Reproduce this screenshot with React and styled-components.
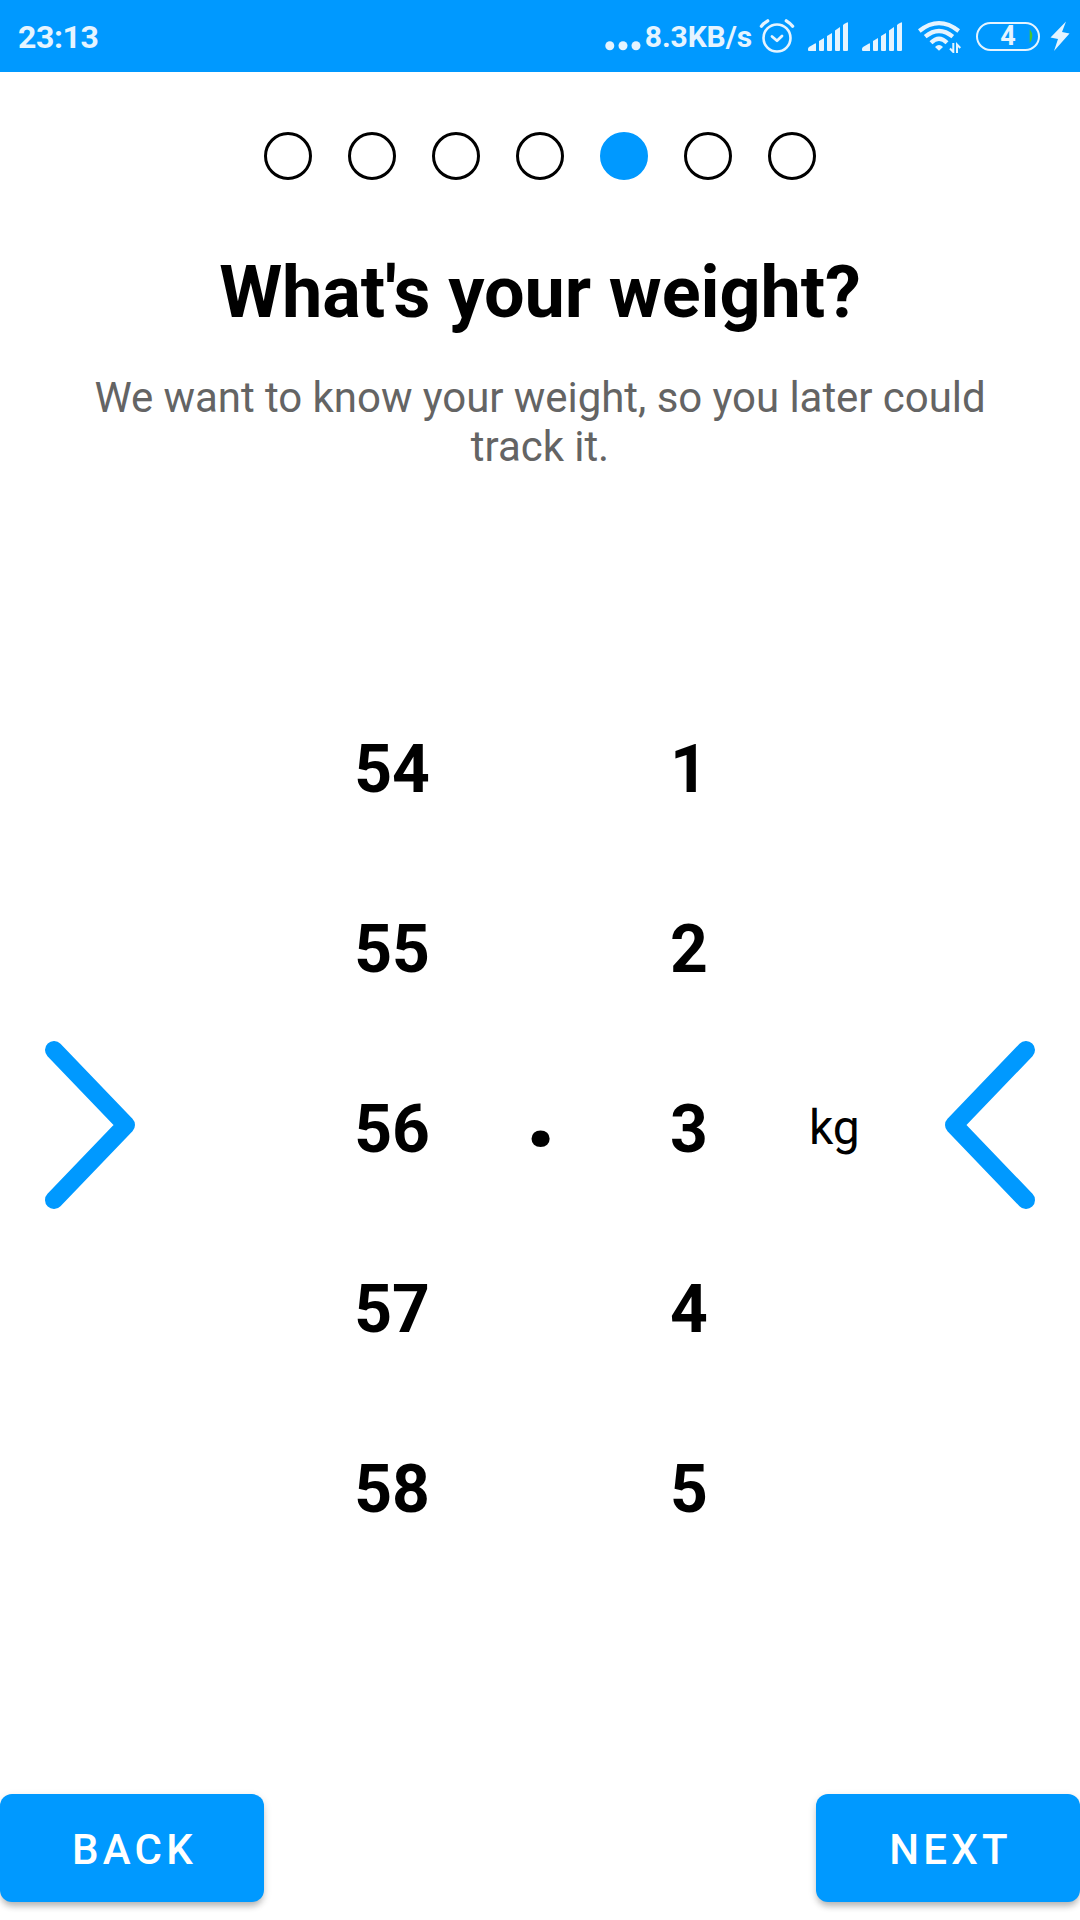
import React from "react";
import styled, { createGlobalStyle } from "styled-components";

const BLUE = "#0099ff";
const STATUS = "#e5f4ff";

const GlobalStyle = createGlobalStyle`
  * { box-sizing: border-box; }
  body { margin: 0; background: #fff; font-family: Roboto, "Noto Sans", sans-serif; }
`;

const Screen = styled.div`
  width: 1080px;
  height: 1920px;
  display: flex;
  flex-direction: column;
  background: #fff;
  color: #000;
  overflow: hidden;
`;

const StatusBar = styled.header`
  height: 72px;
  flex: none;
  display: flex;
  align-items: center;
  justify-content: space-between;
  padding: 0 10px 0 18px;
  background: ${BLUE};
  color: ${STATUS};
`;

const Clock = styled.span`
  font-size: 32px;
  line-height: 38px;
  font-weight: 700;
  letter-spacing: -0.4px;
  padding-top: 1px;
`;

const StatusGroup = styled.div`
  display: flex;
  align-items: center;
  height: 72px;
`;

const Speed = styled.span`
  font-size: 30px;
  line-height: 36px;
  font-weight: 700;
  letter-spacing: -0.1px;
  padding-top: 2px;
`;

const Drawing = styled.svg`
  display: block;
  flex: none;
  margin-left: ${(p) => p.$gap || 0}px;
`;

const Battery = styled.div`
  width: 64px;
  height: 29px;
  margin-left: 15px;
  border: 2px solid ${STATUS};
  border-radius: 15px;
  display: grid;
  grid-template-columns: 9px 1fr 9px;
  align-items: center;
`;

const Charge = styled.span`
  grid-column: 2;
  text-align: center;
  font-size: 27px;
  line-height: 32px;
  margin: -4px 0;
  font-weight: 700;
`;

const Steps = styled.nav`
  display: flex;
  justify-content: center;
  gap: 36px;
  margin-top: 60px;
`;

const Step = styled.span`
  width: 48px;
  height: 48px;
  border-radius: 50%;
  border: 3px solid ${(p) => (p.$active ? BLUE : "#000")};
  background: ${(p) => (p.$active ? BLUE : "transparent")};
`;

const Title = styled.h1`
  margin: 71px 0 0;
  font-size: 72px;
  line-height: 84px;
  font-weight: 700;
  letter-spacing: -0.07px;
  text-align: center;
`;

const Subtitle = styled.p`
  margin: 38px 60px 0;
  font-size: 42px;
  line-height: 49px;
  letter-spacing: -0.05px;
  text-align: center;
  color: #646464;
`;

const Picker = styled.main`
  display: grid;
  grid-template-columns: 135px 137px 240px 57px 240px 136px 135px;
  align-items: center;
  height: 900px;
  margin-top: 209px;
`;

const Arrow = styled.div`
  grid-column: ${(p) => p.$column};
  display: flex;
  justify-content: ${(p) => p.$align};
  padding-bottom: 10px;
`;

const Wheel = styled.div`
  grid-column: ${(p) => p.$column};
  display: grid;
  grid-auto-rows: 180px;
  font-size: 66px;
  font-weight: 700;
  line-height: 78px;
  text-align: center;
  align-items: center;
`;

const Point = styled.span`
  font-size: 114px;
  line-height: 134px;
  font-weight: 700;
  text-align: center;
  padding: 0 0 46px 1px;
`;

const Unit = styled.span`
  font-size: 48px;
  line-height: 56px;
  padding-bottom: 4px;
`;

const Actions = styled.footer`
  display: flex;
  justify-content: space-between;
  margin-top: auto;
  padding-bottom: 18px;
`;

const Button = styled.button`
  width: 264px;
  height: 108px;
  padding: 2px 0 0 5px;
  border: 0;
  border-radius: 12px;
  background: ${BLUE};
  color: #fff;
  font: 500 42px/49px Roboto, sans-serif;
  letter-spacing: 4.2px;
  box-shadow: 0 6px 6px -2px rgba(0, 0, 0, 0.2), 0 3px 9px rgba(0, 0, 0, 0.14);
`;

const Signal = ({ gap }) => (
  <Drawing $gap={gap} width="40" height="29" viewBox="0 0 40 29" fill={STATUS}>
    <path d="M0 27Q0 26 1 25L7 21.5Q8 21 8 22V29H1Q0 29 0 28Z" />
    <path d="M11 19L16 16V28Q16 29 15 29H12Q11 29 11 28Z" />
    <path d="M19 14L24 11V28Q24 29 23 29H20Q19 29 19 28Z" />
    <path d="M27 8.5L32 5V28Q32 29 31 29H28Q27 29 27 28Z" />
    <path d="M35 3Q36 1.5 39 .5Q40 0 40 1V28Q40 29 39 29H36Q35 29 35 28Z" />
  </Drawing>
);

const Wheels = ({ column, values }) => (
  <Wheel $column={column}>
    {values.map((value) => (
      <span key={value}>{value}</span>
    ))}
  </Wheel>
);

const Chevron = ({ column, align, path }) => (
  <Arrow $column={column} $align={align}>
    <Drawing width="90" height="168" viewBox="0 0 90 168" fill="none" stroke={BLUE} strokeWidth="18" strokeLinecap="round" strokeLinejoin="round">
      <path d={path} />
    </Drawing>
  </Arrow>
);

export default function App() {
  return (
    <Screen>
      <GlobalStyle />
      <StatusBar>
        <Clock>23:13</Clock>
        <StatusGroup>
          <Drawing width="40" height="29" viewBox="0 0 40 29" fill={STATUS}>
            <circle cx="4.8" cy="23.7" r="4.5" />
            <circle cx="18" cy="23.7" r="4.5" />
            <circle cx="31" cy="23.7" r="4.5" />
          </Drawing>
          <Speed>8.3KB/s</Speed>
          <Drawing $gap={7} width="36" height="36" viewBox="0 0 36 36" fill="none" stroke={STATUS} strokeLinecap="round" strokeLinejoin="round">
            <circle cx="18" cy="20" r="13.5" strokeWidth="2.6" />
            <path d="M13 18.5L18 22.7L23 18" strokeWidth="2.8" />
            <path d="M2.4 8.2Q5 5 8.7 2.8M27.3 2.8Q31 5 33.6 8.2" strokeWidth="3.3" />
          </Drawing>
          <Signal gap={13} />
          <Signal gap={14} />
          <Drawing $gap={16} width="43" height="34" viewBox="0 0 43 34" fill="none" stroke={STATUS}>
            <path d="M1.3 12Q21 -3.6 40.7 12" strokeWidth="4.2" />
            <path d="M7.2 17.7Q21 6.3 34.8 17.7" strokeWidth="4.2" />
            <path d="M13 23.7Q21 15.8 29 23.7" strokeWidth="4.2" />
            <path d="M17 28Q21 24 25 28L21 31.8Z" fill={STATUS} stroke="none" />
            <path d="M35.3 24V33L32 29.5M39 34V25.5L42.3 29" strokeWidth="2" />
          </Drawing>
          <Battery>
            <Charge>4</Charge>
            <Drawing width="4" height="14" viewBox="0 0 4 14">
              <path d="M0.7 0Q6 7 0.7 14Z" fill="#4ac52e" />
            </Drawing>
          </Battery>
          <Drawing $gap={10} width="20" height="30" viewBox="0 0 20 30" fill={STATUS}>
            <path d="M16 0.5L0.5 16.5L8 18L4 30L19.5 12.5L12 11Z" />
          </Drawing>
        </StatusGroup>
      </StatusBar>
      <Steps>
        {[0, 1, 2, 3, 4, 5, 6].map((i) => (
          <Step key={i} $active={i === 4} />
        ))}
      </Steps>
      <Title>What's your weight?</Title>
      <Subtitle>We want to know your weight, so you later could track it.</Subtitle>
      <Picker>
        <Chevron column={1} align="flex-end" path="M9 9L81 84L9 159" />
        <Wheels column={3} values={[54, 55, 56, 57, 58]} />
        <Point>.</Point>
        <Wheels column={5} values={[1, 2, 3, 4, 5]} />
        <Unit>kg</Unit>
        <Chevron column={7} align="flex-start" path="M81 9L9 84L81 159" />
      </Picker>
      <Actions>
        <Button>BACK</Button>
        <Button>NEXT</Button>
      </Actions>
    </Screen>
  );
}
